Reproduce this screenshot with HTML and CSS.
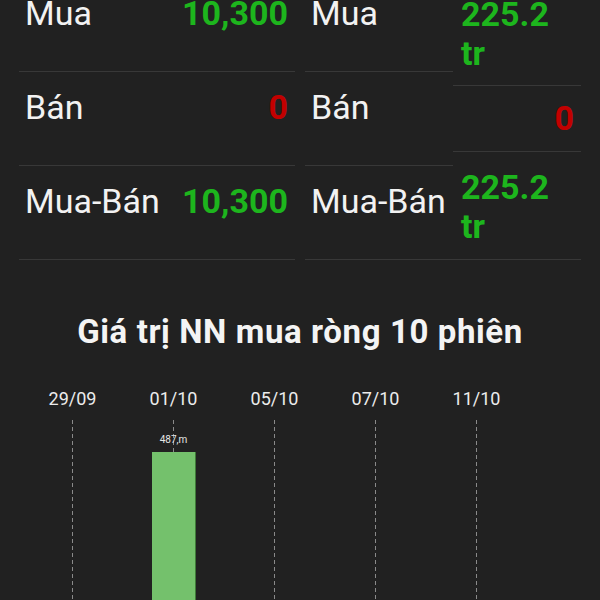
FILE: index.html
```html
<!DOCTYPE html>
<html lang="vi">
<head>
  <meta charset="UTF-8">
  <meta name="viewport" content="width=device-width, initial-scale=1.0">
  <title>Khối ngoại</title>
  <link rel="stylesheet" href="styles.css">
</head>
<body>
  <div class="screen">
    <!-- Khoi luong / Gia tri NN -->
    <div class="tables">
      <div class="table volume">
        <div class="row">
          <div class="label">Mua</div>
          <div class="value up">10,300</div>
        </div>
        <div class="row">
          <div class="label">Bán</div>
          <div class="value down">0</div>
        </div>
        <div class="row">
          <div class="label">Mua-Bán</div>
          <div class="value up">10,300</div>
        </div>
      </div>

      <div class="table amount">
        <div class="labels">
          <div class="cell">Mua</div>
          <div class="cell">Bán</div>
          <div class="cell">Mua-Bán</div>
        </div>
        <div class="values">
          <div class="cell tall up">225.2<br>tr</div>
          <div class="cell short right down">0</div>
          <div class="cell taller up">225.2<br>tr</div>
        </div>
      </div>
    </div>

    <h2 class="chart-title">Giá trị NN mua ròng 10 phiên</h2>

    <div class="chart">
      <div class="col">
        <div class="date">29/09</div>
        <div class="plot"></div>
      </div>
      <div class="col">
        <div class="date">01/10</div>
        <div class="plot">
          <div class="bar-label">487,m</div>
          <div class="bar" style="height: 188px"></div>
        </div>
      </div>
      <div class="col">
        <div class="date">05/10</div>
        <div class="plot"></div>
      </div>
      <div class="col">
        <div class="date">07/10</div>
        <div class="plot"></div>
      </div>
      <div class="col">
        <div class="date">11/10</div>
        <div class="plot"></div>
      </div>
    </div>
  </div>
</body>
</html>
```

FILE: styles.css
```css
html, body {
  margin: 0;
  padding: 0;
  background-color: #212121;
  overflow: hidden;
}
body {
  font-family: Roboto, 'Noto Sans', sans-serif;
  color: #f2f2f2;
}
.screen {
  width: 600px;
  height: 600px;
  overflow: hidden;
}
.tables {
  display: flex;
  gap: 10px;
  padding: 0 19px;
  margin-top: -22px;
}
.table {
  flex: 1;
}
.row {
  display: flex;
  justify-content: space-between;
  height: 94px;
  box-sizing: border-box;
  padding: 15px 7px 0 6px;
  border-bottom: 1px solid #383838;
  font-size: 34px;
}
.label, .labels .cell {
  font-weight: 400;
}
.value {
  font-weight: 700;
}
.up {
  color: #1db51d;
}
.down {
  color: #c20000;
}
.amount {
  display: flex;
}
.labels {
  width: 148px;
}
.labels .cell {
  height: 94px;
  box-sizing: border-box;
  padding: 15px 6px 0 6px;
  border-bottom: 1px solid #383838;
  font-size: 34px;
}
.values {
  flex: 1;
  margin-top: 4px;
}
.values .cell {
  display: flex;
  flex-direction: column;
  justify-content: center;
  box-sizing: border-box;
  padding: 0 7px 0 8px;
  border-bottom: 1px solid #383838;
  font-size: 34px;
  line-height: 39px;
  font-weight: 700;
}
.values .cell.right {
  align-items: flex-end;
}
.values .tall {
  height: 104px;
  display: block;
  padding-top: 13px;
}
.values .short {
  height: 66px;
}
.values .taller {
  height: 108px;
  display: block;
  padding-top: 16px;
}
.chart-title {
  margin: 53px 0 0;
  text-align: center;
  font-size: 33px;
  line-height: 38px;
  letter-spacing: 0.6px;
  font-weight: 700;
  color: #f4f4f4;
}
.chart {
  display: flex;
  padding-left: 22px;
  margin-top: 37px;
}
.col {
  width: 101px;
  display: flex;
  flex-direction: column;
  align-items: center;
}
.date {
  font-size: 18px;
  line-height: 21px;
  color: #ececec;
}
.plot {
  margin-top: 11px;
  width: 100%;
  height: 220px;
  display: flex;
  flex-direction: column;
  justify-content: flex-end;
  align-items: center;
  background-image: linear-gradient(#8a8a8a 0 4px, transparent 4px 7px);
  background-size: 1px 7px;
  background-repeat: repeat-y;
  background-position: center top;
}
.bar-label {
  font-size: 10px;
  line-height: 12px;
  margin-bottom: 6px;
  color: #e6e6e6;
}
.bar {
  width: 44px;
  background-color: #74c16c;
  box-shadow: inset -1px 0 0 #3e7a38;
}
```
